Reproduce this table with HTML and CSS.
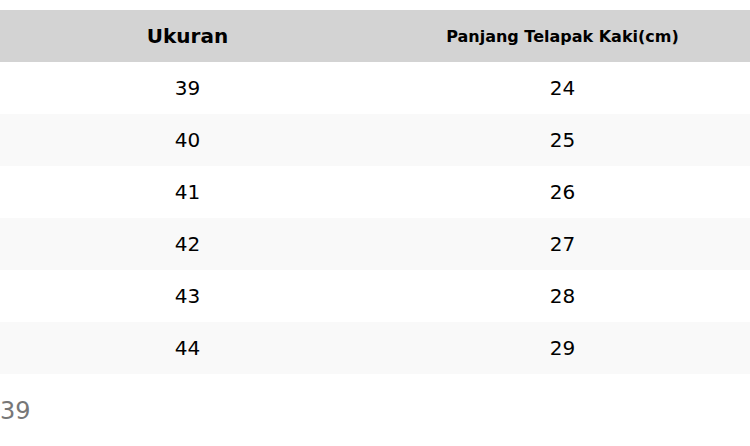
FILE: index.html
```html
<!DOCTYPE html>
<html lang="id">
<head>
<meta charset="utf-8">
<title>Ukuran</title>
<link rel="stylesheet" href="styles.css">
</head>
<body>
<table class="size-table">
  <thead>
    <tr><th class="h-main">Ukuran</th><th class="h-sub">Panjang Telapak Kaki(cm)</th></tr>
  </thead>
  <tbody>
    <tr><td>39</td><td>24</td></tr>
    <tr><td>40</td><td>25</td></tr>
    <tr><td>41</td><td>26</td></tr>
    <tr><td>42</td><td>27</td></tr>
    <tr><td>43</td><td>28</td></tr>
    <tr><td>44</td><td>29</td></tr>
  </tbody>
</table>
<div class="selected">39</div>
</body>
</html>
```
FILE: styles.css
```css
html, body {
  margin: 0;
  padding: 0;
  background: #fff;
  font-family: "DejaVu Sans", sans-serif;
}
.size-table {
  width: 750px;
  margin-top: 10px;
  border-collapse: collapse;
  table-layout: fixed;
}
.size-table th,
.size-table td {
  height: 52px;
  padding: 0;
  text-align: center;
  vertical-align: middle;
  color: #000;
}
.size-table th {
  background: #d3d3d3;
  font-weight: bold;
}
.h-main { font-size: 20px; }
.h-sub { font-size: 16px; }
.size-table td { font-size: 20px; }
.size-table tbody tr:nth-child(even) td { background: #f9f9f9; }
.selected {
  margin-top: 23px;
  font-size: 24px;
  color: #777;
}
```
